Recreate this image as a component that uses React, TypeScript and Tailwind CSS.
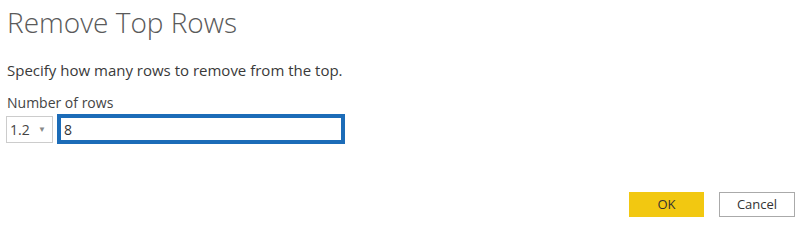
import React, { useState } from 'react';

export default function App() {
  const [rows, setRows] = useState('8');

  return (
    <div className="w-[800px] h-[226px] bg-white relative overflow-hidden" style={{ fontFamily: '"Open Sans", "Noto Sans", sans-serif' }}>
      <div className="px-[7px] pt-[4px]">
        <h1 className="text-[28px] font-light text-[#5a5a5a] leading-[36px]">Remove Top Rows</h1>
        <p className="mt-[21px] text-[15px] text-[#3a3a3a] leading-[18px]">Specify how many rows to remove from the top.</p>
        <div className="mt-[16px] text-[14px] text-[#444] leading-[16px]">Number of rows</div>
        <div className="mt-[3px] flex items-center gap-[4px]">
          <div className="ml-[-1px] w-[47px] h-[27px] border border-[#ccc] flex items-center justify-between pl-[3px] pr-[6px] text-[14px] text-[#444]">
            <span>1.2</span>
            <span className="text-[8px] text-[#888]">▼</span>
          </div>
          <input
            className="w-[288px] h-[30px] border-[4px] border-[#1c6cb8] px-[3px] text-[14px] text-[#333] outline-none"
            value={rows}
            onChange={e => setRows(e.target.value)}
          />
        </div>
      </div>
      <div className="absolute left-[629px] top-[192px] flex gap-[15px]">
        <button className="w-[75px] h-[25px] bg-[#f2c811] text-[13px] text-[#333]">OK</button>
        <button className="w-[76px] h-[25px] border border-[#aaa] bg-white text-[13px] text-[#333]">Cancel</button>
      </div>
    </div>
  );
}
